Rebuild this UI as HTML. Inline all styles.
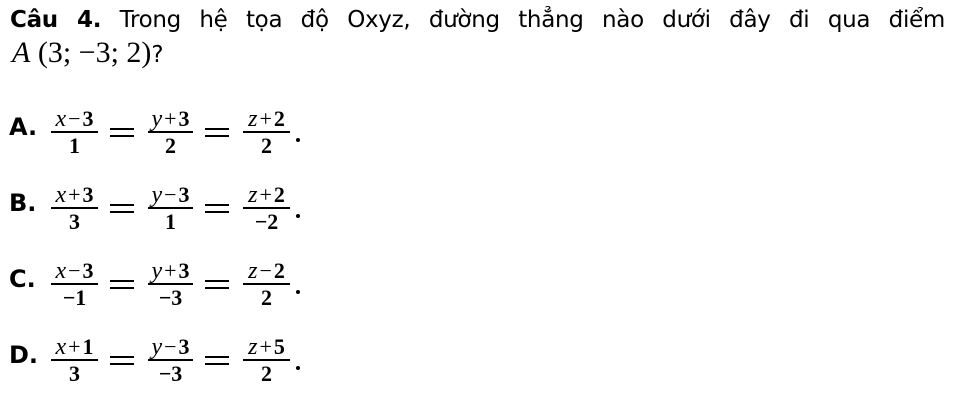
<!DOCTYPE html>
<html><head><meta charset="utf-8"><style>
body{margin:0;width:963px;height:403px;background:#fff;position:relative;overflow:hidden;color:#000}
.t{position:absolute;left:10px;width:935px;font-family:"DejaVu Sans","Liberation Sans",sans-serif;font-size:23px;text-align:justify;text-align-last:justify;top:7px;white-space:nowrap;letter-spacing:-0.3px;word-spacing:1px}
.m{font-family:"Liberation Serif",serif}
.l2{position:absolute;left:12px;top:36px;font-size:30px}
.lab{position:absolute;left:9px;font-family:"DejaVu Sans","Liberation Sans",sans-serif;font-weight:bold;font-size:24px}
.f{position:absolute;font-family:"Liberation Serif",serif;font-size:22px;text-align:center;font-weight:bold;white-space:nowrap}
.f i{font-weight:normal;font-size:24px}
.o{margin:0 2px;font-family:"Liberation Serif",serif;font-weight:normal}
.bar{position:absolute;height:2px;background:#000}
.eq{position:absolute;height:2px;width:24px;background:#000}
.dot{position:absolute;width:4px;height:4px;background:#000;border-radius:50%}
</style></head><body>
<div class="t"><b>Câu 4.</b> Trong hệ tọa độ Oxyz, đường thẳng nào dưới đây đi qua điểm</div>
<div class="l2 m"><i>A</i> (3; −3; 2)<span style="font-family:'DejaVu Sans',sans-serif;font-size:23px">?</span></div>
<script>
const rows=[["A.",["<i>x</i><span class=o>−</span>3","1"],["<i>y</i><span class=o>+</span>3","2"],["<i>z</i><span class=o>+</span>2","2"]],
["B.",["<i>x</i><span class=o>+</span>3","3"],["<i>y</i><span class=o>−</span>3","1"],["<i>z</i><span class=o>+</span>2","−2"]],
["C.",["<i>x</i><span class=o>−</span>3","−1"],["<i>y</i><span class=o>+</span>3","−3"],["<i>z</i><span class=o>−</span>2","2"]],
["D.",["<i>x</i><span class=o>+</span>1","3"],["<i>y</i><span class=o>−</span>3","−3"],["<i>z</i><span class=o>+</span>5","2"]]];
let h="";
rows.forEach((r,i)=>{const c=132+i*76;
h+=`<div class="lab" style="top:${c-17}px;line-height:24px">${r[0]}</div>`;
const xs=[[51,98],[148,193],[243,290]];
for(let k=0;k<3;k++){const [a,b]=xs[k];
h+=`<div class="f" style="left:${a-10}px;width:${b-a+20}px;top:${c-24}px;line-height:22px">${r[k+1][0]}</div>`;
h+=`<div class="bar" style="left:${a}px;width:${b-a}px;top:${c-1}px"></div>`;
h+=`<div class="f" style="left:${a-10}px;width:${b-a+20}px;top:${c+3}px;line-height:22px">${r[k+1][1]}</div>`;}
for(const x of [110,205]){h+=`<div class="eq" style="left:${x}px;top:${c-4}px"></div><div class="eq" style="left:${x}px;top:${c+3}px"></div>`;}
h+=`<div class="dot" style="left:296px;top:${c+6}px"></div>`;});
document.write(h);
</script>
</body></html>
